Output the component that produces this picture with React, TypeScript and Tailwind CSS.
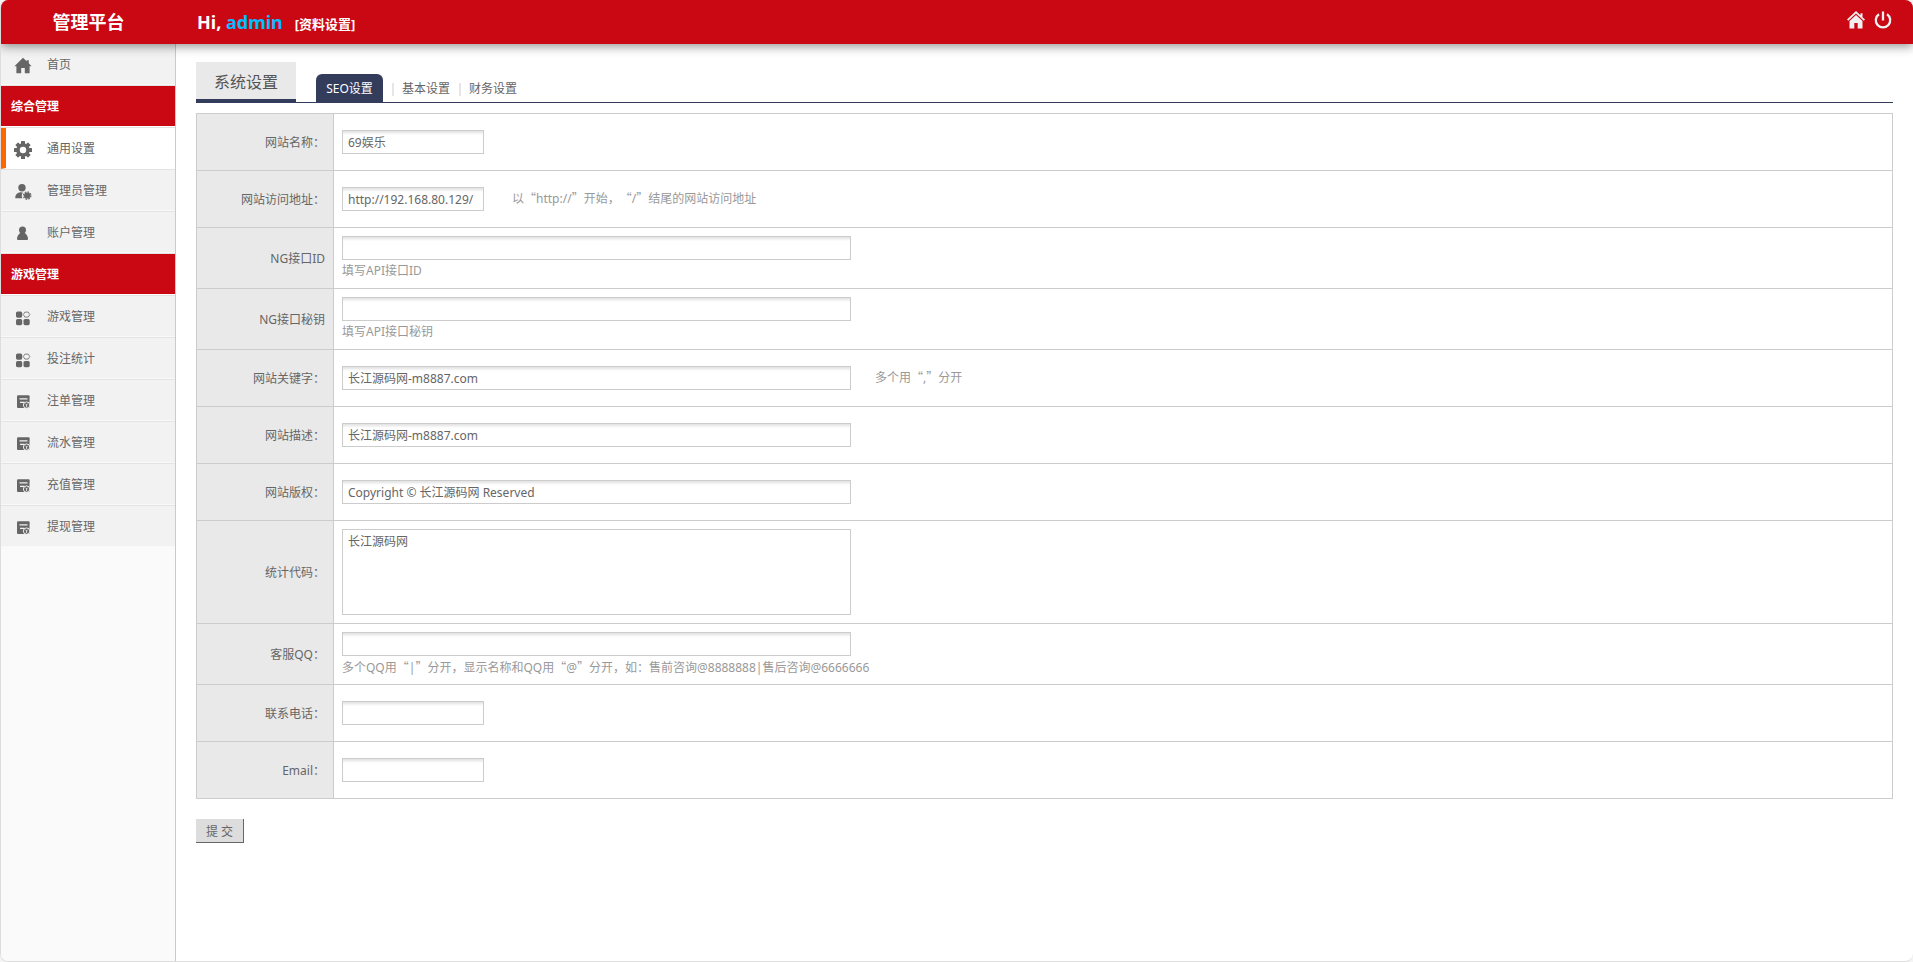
import { Fragment, type ReactNode } from "react";

type IconName = "home" | "gear" | "admin" | "user" | "apps" | "order";

function MenuIcon({ name }: { name: IconName }) {
  const common = { width: 18, height: 18, viewBox: "0 0 18 18", fill: "#666666", "aria-hidden": true } as const;
  switch (name) {
    case "home":
      return (
        <svg {...common}>
          <path d="M9 .8 .4 9.200h2v7h4.800v-5.200h3.600v5.200h4.800v-7h2L14.800 6.300V3.200h-2.200v1.100z" />
        </svg>
      );
    case "gear":
      return (
        <svg {...common}>
          <circle cx="9" cy="9" r="5" fill="none" stroke="#666666" strokeWidth="3.600" />
          {[0, 45, 90, 135].map((angle) => (
            <g key={angle} transform={`rotate(${angle} 9 9)`}>
              <rect x="7" y="0" width="4" height="3.500" rx=".6" />
              <rect x="7" y="14.500" width="4" height="3.500" rx=".6" />
            </g>
          ))}
        </svg>
      );
    case "admin":
      return (
        <svg {...common}>
          <circle cx="8" cy="4.800" r="3.700" />
          <path d="M1.200 15.300c0-3.300 1.600-5.500 4.800-6l3 .2c-1.400 1.500-1.600 3.800-.6 5.800z" />
          <circle cx="13.200" cy="12.600" r="3.200" />
          <circle cx="13.200" cy="12.600" r="3.700" fill="none" stroke="#666666" strokeWidth="1.200" strokeDasharray="1.600 1.300" />
        </svg>
      );
    case "user":
      return (
        <svg {...common}>
          <circle cx="8.500" cy="5.100" r="3.500" />
          <path d="M6.500 7.800h4c2.200 1.600 3.400 3.600 3.500 6 0 .9-.5 1.300-1.300 1.300H4.300c-.8 0-1.300-.4-1.300-1.300.1-2.400 1.300-4.400 3.500-6z" />
        </svg>
      );
    case "apps":
      return (
        <svg {...common}>
          <rect x="2" y="2.500" width="6.200" height="6.200" rx="1.600" />
          <rect x="2" y="10" width="6.200" height="6.200" rx="1.600" />
          <rect x="9.500" y="10" width="6.200" height="6.200" rx="1.600" />
          <path d="M10.900 3.100h3.300l1.600 2.500-1.600 2.500h-3.300L9.300 5.600z" fill="none" stroke="#777777" strokeWidth=".9" />
        </svg>
      );
    case "order":
      return (
        <svg {...common}>
          <path d="M3.500 2.500h11.800v3H3.500z" />
          <rect x="3" y="2.500" width="12.500" height="12.500" rx="1" />
          <path d="M5.500 5.800h8M6 9.300h4.500" stroke="#f2f2f2" strokeWidth="1.200" />
          <circle cx="12.600" cy="12.100" r="3.200" stroke="#f2f2f2" strokeWidth="1" />
          <path d="M11.500 10.700l1.100 1.200 1.100-1.200M12.600 11.900v2.200" stroke="#f2f2f2" strokeWidth=".9" fill="none" />
        </svg>
      );
  }
}

type MenuRow =
  | { kind: "group"; label: string }
  | { kind: "link"; label: string; icon: IconName; active?: boolean };

const menu: MenuRow[] = [
  { kind: "link", label: "首页", icon: "home" },
  { kind: "group", label: "综合管理" },
  { kind: "link", label: "通用设置", icon: "gear", active: true },
  { kind: "link", label: "管理员管理", icon: "admin" },
  { kind: "link", label: "账户管理", icon: "user" },
  { kind: "group", label: "游戏管理" },
  { kind: "link", label: "游戏管理", icon: "apps" },
  { kind: "link", label: "投注统计", icon: "apps" },
  { kind: "link", label: "注单管理", icon: "order" },
  { kind: "link", label: "流水管理", icon: "order" },
  { kind: "link", label: "充值管理", icon: "order" },
  { kind: "link", label: "提现管理", icon: "order" },
];

function Sidebar() {
  return (
    <nav className="w-[175px] shrink-0 border-r border-[#c3ccd3] bg-[#fafafa]">
      <ul>
        {menu.map((row, i) => (
          <li key={i} className="border-t border-[#e3e3e3] first:border-t-0">
            {row.kind === "group" ? (
              <h2 className="flex h-[41px] items-center border-b border-white bg-[#c90814] pt-0.5 pl-[10px] text-xs font-bold text-white">
                {row.label}
              </h2>
            ) : (
              <a
                href="#"
                className={
                  row.active
                    ? "flex h-[41px] items-center border-b border-l-5 border-white border-l-[#ff6600] bg-white pt-0.5 pl-2 text-xs text-[#666666]"
                    : "flex h-[41px] items-center border-b border-[#f9f9f9] bg-[#f2f2f2] pt-0.5 pl-[13px] text-xs text-[#666666]"
                }
              >
                <span className="mt-0.5 w-[33px]">
                  <MenuIcon name={row.icon} />
                </span>
                {row.label}
              </a>
            )}
          </li>
        ))}
      </ul>
    </nav>
  );
}

function Header() {
  return (
    <header className="z-10 flex h-11 shrink-0 items-center bg-[#c90814] pr-[21px] text-white shadow-[0_2px_10px_rgba(0,0,0,0.45)]">
      <h1 className="w-[175px] text-center text-lg font-bold">管理平台</h1>
      <p className="flex items-baseline pl-[21px] text-lg font-bold">
        Hi,&nbsp;<span className="text-[#00bfff]">admin</span>
        <a href="#" className="ml-3 text-[13px]">[资料设置]</a>
      </p>
      <div className="mb-1 ml-auto flex gap-[9px]">
        <a href="#" aria-label="首页">
          <svg width="18" height="18" viewBox="0 0 18 18" fill="#f0f0f0">
            <path d="M9 0 0 8.600l1.200 1.200L9 2.400l7.800 7.400L18 8.600l-2.500-2.400V2.200h-2v2z" />
            <path d="M9 3.900 2.500 10v7.500h4.800v-5.500h3.400v5.500h4.800V10z" />
          </svg>
        </a>
        <a href="#" aria-label="退出">
          <svg width="18" height="18" viewBox="0 0 18 18" fill="none" stroke="#f0f0f0" strokeWidth="2.300">
            <path d="M5 3.200a7.200 7.200 0 1 0 8 0M9 .5v9" />
          </svg>
        </a>
      </div>
    </header>
  );
}

function Hint({ text, className }: { text: string; className?: string }) {
  return (
    <span className={className}>
      {text.split(/([“”])/).map((part, i) =>
        part === "“" || part === "”" ? (
          <span key={i} className="font-['Noto_Sans_CJK_SC',sans-serif]">{part}</span>
        ) : (
          <Fragment key={i}>{part}</Fragment>
        ),
      )}
    </span>
  );
}

const inputBase = "h-6 border border-[#cccccc] bg-white px-[5px] text-xs text-[#666666] shadow-[inset_0_4px_3px_-2px_rgba(0,0,0,0.12)] outline-none";
const shortInput = inputBase + " w-[142px]";
const longInput = inputBase + " w-[509px]";
const blockHint = "block h-5 leading-[22px] text-[#999999]";

function Row({ id, label, children }: { id: string; label: string; children: ReactNode }) {
  return (
    <tr>
      <th scope="row" className="w-[137px] border border-[#cccccc] bg-[#e9e9e9] px-2 pt-[10px] pb-2 text-right font-normal">
        <label htmlFor={id}>{label}</label>
      </th>
      <td className="h-[57px] border border-[#cccccc] p-2">{children}</td>
    </tr>
  );
}

export default function App() {
  return (
    <div className="min-h-screen bg-[#f4f4f4] font-['Noto_Sans','Noto_Sans_CJK_SC',sans-serif] text-xs text-[#666666] [text-spacing-trim:space-all]">
      <div className="flex min-h-screen flex-col overflow-hidden rounded-lg border-b border-l border-[#dddddd] bg-white">
        <Header />
        <div className="flex flex-1">
          <Sidebar />
          <main className="flex-1 pt-[18px] pr-5 pl-5">
            <div className="flex items-end border-b border-[#343c5c]">
              <h2 className="-mb-px flex h-[41px] w-[100px] items-center justify-center border-b-4 border-[#343c5c] bg-[#e9e9e9] pt-0.5 text-base text-[#555555]">
                系统设置
              </h2>
              <div className="ml-5 flex h-7 items-center">
                <a href="#" className="flex h-7 w-[67px] items-center justify-center rounded-t-md bg-[#343c5c] pt-0.5 text-white">SEO设置</a>
                <span className="mt-0.5 ml-[9px] h-[13px] w-0.5 bg-[#e8e4e8]" />
                <a href="#" className="mt-0.5 ml-2">基本设置</a>
                <span className="mt-0.5 ml-[9px] h-[13px] w-0.5 bg-[#e8e4e8]" />
                <a href="#" className="mt-0.5 ml-2">财务设置</a>
              </div>
            </div>
            <form onSubmit={(e) => e.preventDefault()}>
              <table className="mt-[10px] w-full border-collapse">
                <tbody>
                  <Row id="name" label="网站名称：">
                    <input id="name" className={shortInput} defaultValue="69娱乐" />
                  </Row>
                  <Row id="url" label="网站访问地址：">
                    <input id="url" className={shortInput} defaultValue="http://192.168.80.129/" />
                    <Hint className="ml-7 align-[1px] text-[#999999]" text="以“http://”开始，“/”结尾的网站访问地址" />
                  </Row>
                  <Row id="ngid" label="NG接口ID">
                    <input id="ngid" className={longInput + " block"} />
                    <Hint className={blockHint} text="填写API接口ID" />
                  </Row>
                  <Row id="ngkey" label="NG接口秘钥">
                    <input id="ngkey" className={longInput + " block"} />
                    <Hint className={blockHint} text="填写API接口秘钥" />
                  </Row>
                  <Row id="keywords" label="网站关键字：">
                    <input id="keywords" className={longInput} defaultValue="长江源码网-m8887.com" />
                    <Hint className="ml-6 align-[1px] text-[#999999]" text="多个用“,”分开" />
                  </Row>
                  <Row id="desc" label="网站描述：">
                    <input id="desc" className={longInput} defaultValue="长江源码网-m8887.com" />
                  </Row>
                  <Row id="copyright" label="网站版权：">
                    <input id="copyright" className={longInput} defaultValue="Copyright © 长江源码网 Reserved" />
                  </Row>
                  <Row id="stats" label="统计代码：">
                    <textarea
                      id="stats"
                      className="block h-[86px] w-[509px] resize-none border border-[#cccccc] px-[5px] py-1 text-xs leading-4 text-[#666666] outline-none"
                      defaultValue="长江源码网"
                    />
                  </Row>
                  <Row id="qq" label="客服QQ：">
                    <input id="qq" className={longInput + " block"} />
                    <Hint className={blockHint} text="多个QQ用“|”分开，显示名称和QQ用“@”分开，如：售前咨询@8888888|售后咨询@6666666" />
                  </Row>
                  <Row id="tel" label="联系电话：">
                    <input id="tel" className={shortInput} />
                  </Row>
                  <Row id="email" label="Email：">
                    <input id="email" className={shortInput} />
                  </Row>
                </tbody>
              </table>
              <button type="submit" className="mt-5 h-6 w-12 border-r border-b border-[#666666] bg-[#dddddd] pt-0.5 text-xs">
                提 交
              </button>
            </form>
          </main>
        </div>
      </div>
    </div>
  );
}
